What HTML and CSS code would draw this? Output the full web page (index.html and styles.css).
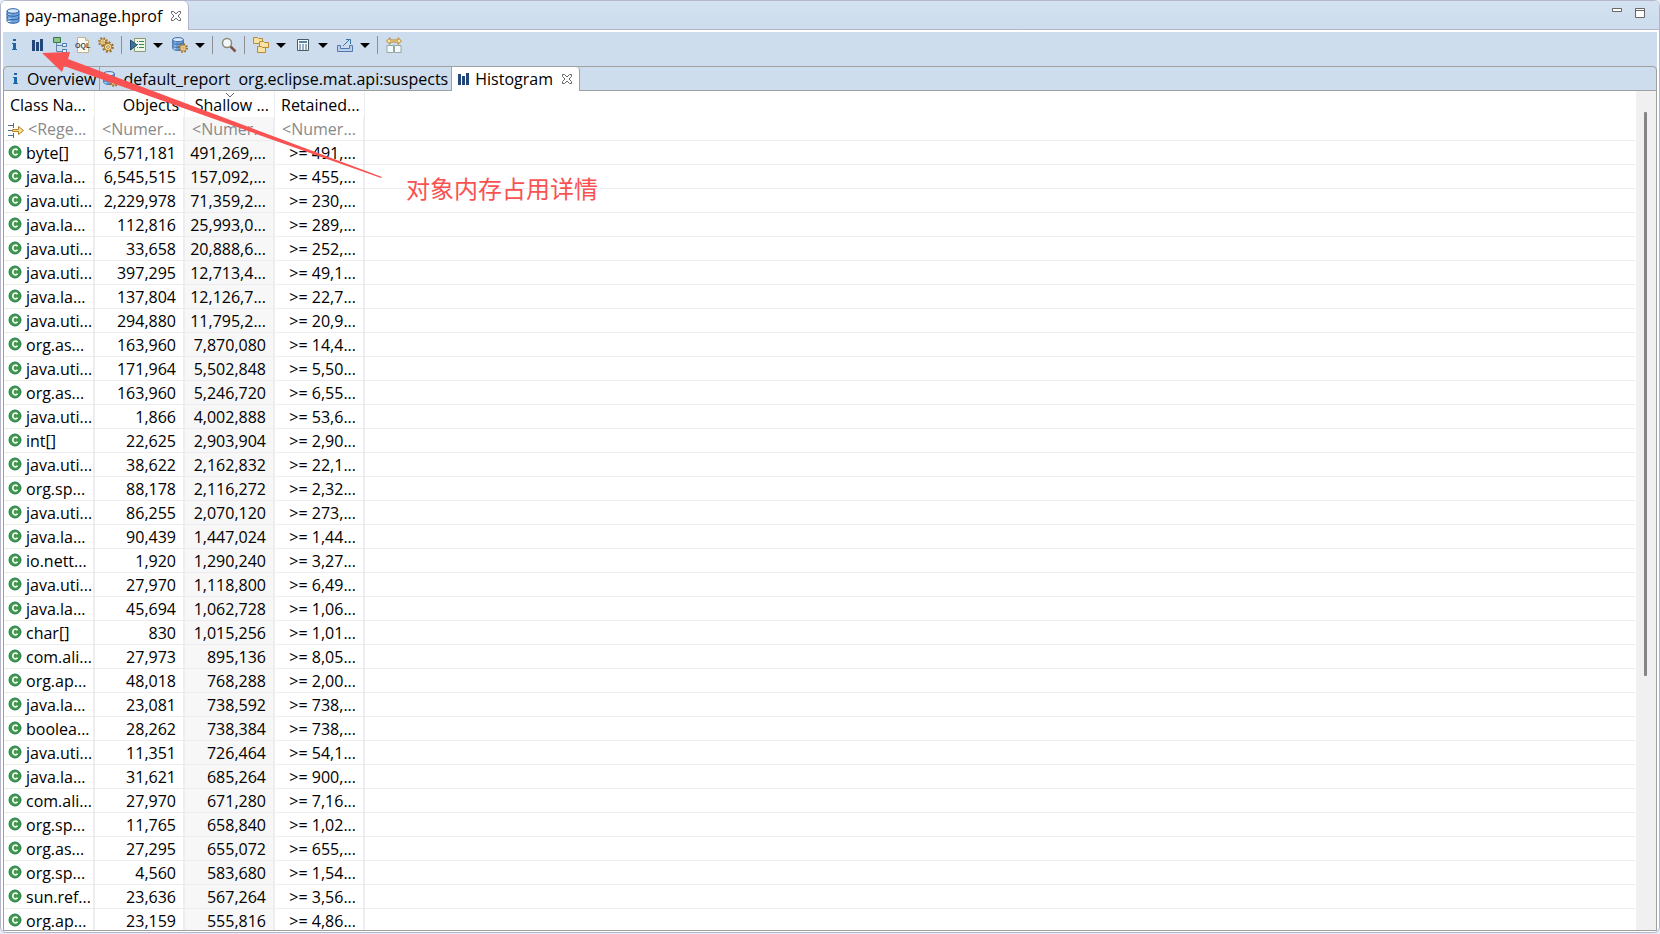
FILE: index.html
```html
<!DOCTYPE html>
<html lang="zh-CN">
<head>
    <meta charset="UTF-8">
    <meta name="viewport" content="width=device-width, initial-scale=1.0">
    <title>pay-manage.hprof</title>
    <link rel="stylesheet" href="styles.css">
</head>
<body>
    <svg class="symbols" aria-hidden="true">
        <symbol id="db" viewBox="0 0 16 16">
            <path d="M2 3v10c0 3 12 3 12 0V3z" fill="#6fa3e0" stroke="#2c5f9e"/>
            <ellipse cx="8" cy="3" rx="6" ry="2.3" fill="#d6e8fb" stroke="#2c5f9e"/>
            <path d="M4 6.500v1M4 10v1.500M4 13v1" stroke="#e6f1fd" stroke-width="3"/>
            <path d="M2 6c0 3 12 3 12 0M2 9.500c0 3 12 3 12 0" fill="none" stroke="#2c5f9e"/>
        </symbol>
        <symbol id="gear" viewBox="0 0 16 16">
            <circle cx="8" cy="8" r="6.300" fill="none" stroke="#9a6b26" stroke-width="3" stroke-dasharray="2.500 2.448"/>
            <circle cx="8" cy="8" r="4.800" fill="#f9dc96" stroke="#a9782e" stroke-width="1.300"/>
            <circle cx="8" cy="8" r="1.800" fill="#fff" stroke="#9a6b26"/>
        </symbol>
        <symbol id="dbgear" viewBox="0 0 16 16">
            <use href="#db" x="-1" y="0" width="14" height="14"/>
            <use href="#gear" x="6" y="6" width="10" height="10"/>
        </symbol>
        <symbol id="info" viewBox="0 0 16 16">
            <path d="M7 2h3v2H7zM6 6h4v6h1v1H6v-1h1V7H6z" fill="#1f66a5"/>
        </symbol>
        <symbol id="bars" viewBox="0 0 16 16">
            <path d="M3 3h3v11H3zM7 5h3v9H7zM11 2h3v12h-3z" fill="#23467b"/>
        </symbol>
        <symbol id="close" viewBox="0 0 12 12">
            <path d="M1.500 1.500h2L6 4l2.500-2.500h2v2L8 6l2.500 2.500v2h-2L6 8l-2.500 2.500h-2v-2L4 6 1.500 3.500z" fill="#fff" stroke="#666"/>
        </symbol>
        <symbol id="class" viewBox="0 0 14 14">
            <circle cx="7" cy="7" r="6" fill="#3b9a49" stroke="#2b7d4c"/>
            <path d="M9.500 5.200C8 3.300 4.800 4 4.800 7s3.200 3.700 4.700 1.800" fill="none" stroke="#fff" stroke-width="1.700"/>
        </symbol>
    </svg>

    <div class="view">
        <header class="editor-bar">
            <button type="button" class="editor-tab">
                <svg class="icon"><use href="#db"/></svg>
                <span>pay-manage.hprof</span>
                <svg class="close"><use href="#close"/></svg>
            </button>
            <div class="window-buttons">
                <button type="button" aria-label="Minimize"><svg viewBox="0 0 10 10"><path d="M.5.500h9v3h-9z" fill="#fff" stroke="#666"/></svg></button>
                <button type="button" aria-label="Maximize"><svg viewBox="0 0 10 10"><path d="M.5.500h9v9h-9zM0 2.500h10" fill="#fff" stroke="#666"/></svg></button>
            </div>
        </header>

        <main class="editor">
            <div class="toolbar">
                <button type="button" aria-label="Overview"><svg class="icon"><use href="#info"/></svg></button>
                <button type="button" aria-label="Histogram"><svg class="icon"><use href="#bars"/></svg></button>
                <button type="button" aria-label="Dominator tree">
                    <svg class="icon" viewBox="0 0 16 16"><path d="M4.500 6v8.500H10M4.500 8.500H10" fill="none" stroke="#5d86b3"/><path d="M1.500.500h7v5h-7z" fill="#8cc487" stroke="#35784a"/><path d="M10.500 6.500h4v3h-4zM10.500 12.500h4v3h-4z" fill="#e7f0fa" stroke="#4c7cae"/></svg>
                </button>
                <button type="button" aria-label="OQL">
                    <svg class="icon" viewBox="0 0 16 16"><path d="M2.500.500h8l3 3v12h-11z" fill="#fdfcf6" stroke="#c2b386"/><path d="M10.500.500v3h3" fill="#e7d9ac" stroke="#c2b386"/><text class="oql" x="0" y="11">OQL</text></svg>
                </button>
                <button type="button" aria-label="Calculate"><svg class="icon" viewBox="0 0 16 16"><use href="#gear" x="0" y="0" width="10" height="10"/><use href="#gear" x="4" y="4" width="12" height="12"/></svg></button>
                <i class="separator"></i>
                <button type="button" class="drop" aria-label="Run report">
                    <svg class="icon" viewBox="0 0 16 16"><path d="M4.500 1.500h11v13h-11z" fill="#edf6e9" stroke="#8d9a6c"/><path d="M7 4.500h1m1 0h5M7 7.500h1m1 0h5M7 10.500h1m1 0h5" stroke="#3f8a4a"/><path d="M.5 3v10L7 8z" fill="#3f7397" stroke="#1e4f75"/></svg>
                </button>
                <button type="button" class="drop" aria-label="Queries"><svg class="icon"><use href="#dbgear"/></svg></button>
                <i class="separator"></i>
                <button type="button" aria-label="Find">
                    <svg class="icon" viewBox="0 0 16 16"><path d="M9.500 9.500l5 5" stroke="#825347" stroke-width="2.500"/><circle cx="6" cy="6" r="4.500" fill="#f3f8fb" stroke="#8b8a78" stroke-width="1.500"/></svg>
                </button>
                <i class="separator"></i>
                <button type="button" class="drop" aria-label="Group">
                    <svg class="icon" viewBox="0 0 16 16"><g fill="#f9e3a0" stroke="#b8893a"><path d="M.5.500h4l1 1h4v5h-9z"/><path d="M6.500 4.500h4l1 1h4v5h-9z"/><path d="M4.500 9.500h4l1 1h3v5h-8z"/></g></svg>
                </button>
                <button type="button" class="drop" aria-label="Calculate retained size">
                    <svg class="icon" viewBox="0 0 16 16"><path d="M2.500 2.500h11v11h-11z" fill="#fff" stroke="#465c62"/><path d="M4 4h8v2H4z" fill="#4e89ad"/><path d="M4 8h8M4 10h8M4 12h8" stroke="#376484" stroke-dasharray="2 1"/></svg>
                </button>
                <button type="button" class="drop" aria-label="Export">
                    <svg class="icon" viewBox="0 0 16 16"><path d="M.5 8.500h3v3h9v-3h3v6H.5z" fill="#b8d0ed" stroke="#5577ad"/><path d="M6 9l7-7M9 2.500h4.500V7" fill="none" stroke="#3675a9"/></svg>
                </button>
                <i class="separator"></i>
                <button type="button" aria-label="Compare">
                    <svg class="icon" viewBox="0 0 16 16"><path d="M.5 4L4 .7V3h8V.7L15.500 4 12 7.300V5H4v2.300z" fill="#fbe7a5" stroke="#b6842d"/><path d="M1 8.500h6.500v7H1zM8.500 8.500H15v7H8.500z" fill="#f4f9fb" stroke="#93a8a5"/></svg>
                </button>
            </div>

            <section class="pages">
                <nav class="page-tabs">
                    <button type="button" class="page-tab"><svg class="icon"><use href="#info"/></svg>Overview</button>
                    <button type="button" class="page-tab"><svg class="icon"><use href="#dbgear"/></svg><span>default_report&nbsp; org.eclipse.mat.api:suspects</span></button>
                    <button type="button" class="page-tab active"><svg class="icon"><use href="#bars"/></svg>Histogram<svg class="close"><use href="#close"/></svg></button>
                </nav>
                <div class="table-area">
                    <div class="table-clip">
                        <table>
                            <colgroup><col class="name-col"><col class="data-col"><col class="data-col"><col class="data-col"><col></colgroup>
                            <thead>
                                <tr>
                                    <th>Class Na...</th>
                                    <th>Objects</th>
                                    <th>Shallow ...<svg class="sort" viewBox="0 0 10 6"><path d="M1 1l4 4 4-4" fill="none" stroke="#666"/></svg></th>
                                    <th>Retained...</th>
                                    <th></th>
                                </tr>
                            </thead>
                            <tbody id="rows">
                                <tr>
                                    <td>
                                        <div class="name">
                                            <svg class="icon" viewBox="0 0 16 16"><path d="M0 3.500h5M0 13.500h5M5.500 1v5M5.500 11v5M0 8.500h4" stroke="#4d708c"/><path d="M4.500 7.500h6v-3l5 4-5 4v-3h-6z" fill="#fbe29b" stroke="#b57f22"/></svg>
                                            <input type="text" aria-label="Class name filter" placeholder="&lt;Rege...">
                                        </div>
                                    </td>
                                    <td><input type="text" aria-label="Objects filter" placeholder="&lt;Numer..."></td>
                                    <td><input type="text" aria-label="Shallow heap filter" placeholder="&lt;Numer..."></td>
                                    <td><input type="text" aria-label="Retained heap filter" placeholder="&lt;Numer..."></td>
                                    <td></td>
                                </tr>
                            </tbody>
                        </table>
                    </div>
                    <div class="scrollbar"><div class="thumb"></div></div>
                </div>
            </section>
        </main>
    </div>

    <div class="note">
        <svg viewBox="0 0 342 128"><path d="M0 0L28-1 26 6 340 124 339 125 22 13 20 19z" fill="#fa5252"/></svg>
        <span>对象内存占用详情</span>
    </div>
    <script src="script.js"></script>
</body>
</html>
```
FILE: styles.css
```css
:root {
    --frame: #b4b7cb;
    --line: #a0a0a0;
    --bar: #cddded;
    --grid: #ededf0;
    --note: #fa5252;
}

* {
    box-sizing: border-box;
}

body {
    margin: 0;
    height: 100vh;
    overflow: hidden;
    background-color: #e6ebf8;
    color: #000;
    font: 16px/24px "Open Sans", "Noto Sans CJK SC", sans-serif;
}

button {
    display: flex;
    align-items: center;
    padding: 0;
    border: none;
    background: none;
    color: inherit;
    font: inherit;
}

svg {
    display: block;
    flex: none;
}

.symbols {
    position: absolute;
    width: 0;
    height: 0;
}

.icon {
    width: 16px;
    height: 16px;
}

.close {
    width: 12px;
    height: 12px;
}

.view {
    display: flex;
    flex-direction: column;
    height: calc(100vh - 1px);
    border: 1px solid var(--frame);
    border-radius: 6px;
    background-color: #fff;
    overflow: hidden;
}

.editor-bar {
    display: flex;
    justify-content: space-between;
    height: 29px;
    background: linear-gradient(#d3e1f0, var(--bar));
    box-shadow: inset 0 -1px var(--frame);
}

.editor-tab {
    gap: 4px;
    padding: 0 6px 0 4px;
    border-right: 1px solid var(--frame);
    border-radius: 0 6px 0 0;
    background-color: #fff;
}

.editor-tab .close {
    margin-left: 4px;
}

.window-buttons {
    display: flex;
    gap: 13px;
    padding: 7px 14px 0 0;
    align-items: flex-start;
}

.window-buttons svg {
    width: 10px;
    height: 10px;
}

.editor {
    display: flex;
    flex: 1;
    flex-direction: column;
    min-height: 0;
    margin: 2px 2px 1px;
    background-color: var(--bar);
}

.toolbar {
    display: flex;
    align-items: center;
    height: 34px;
    padding: 0 0 8px 3px;
    gap: 7px;
}

.separator {
    width: 1px;
    height: 18px;
    margin-right: 1px;
    background-color: #8c8f94;
}

.drop {
    gap: 7px;
}

.drop + .drop {
    margin-left: 2px;
}

.drop::after {
    content: "";
    border: 5px solid transparent;
    border-top-color: #000;
    border-bottom: none;
}

.oql {
    font: bold 7px "Liberation Sans", sans-serif;
    fill: #444;
}

.pages {
    display: flex;
    flex: 1;
    flex-direction: column;
    min-height: 0;
    border: 1px solid var(--line);
    border-radius: 4px 4px 0 0;
    background-color: var(--bar);
}

.page-tabs {
    display: flex;
    height: 24px;
    box-shadow: inset 0 -1px var(--line);
}

.page-tab {
    gap: 4px;
    padding: 0 3px;
    border-right: 1px solid var(--line);
}

.page-tab.active {
    padding-right: 6px;
    border-radius: 0 4px 0 0;
    background-color: #fff;
}

.page-tab .close {
    margin-left: 4px;
}

.table-area {
    display: flex;
    flex: 1;
    min-height: 0;
    background-color: #fff;
}

.table-clip {
    flex: 1;
    overflow: hidden;
    margin-right: 1px;
}

table {
    width: 100%;
    border-collapse: separate;
    border-spacing: 0;
    table-layout: fixed;
}

.name-col {
    width: 91px;
}

.data-col {
    width: 90px;
}

th,
td {
    height: 24px;
    padding: 2px 7px 0 4px;
    border-right: 2px solid var(--grid);
    border-bottom: 1px solid var(--grid);
    line-height: 21px;
    text-align: right;
    white-space: nowrap;
    overflow: hidden;
}

th {
    position: relative;
    height: 26px;
    padding: 2px 5px 0 6px;
    border-right-width: 1px;
    border-bottom: none;
    font-weight: normal;
}

th:first-child,
td:first-child {
    text-align: left;
}

td:first-child {
    padding-right: 0;
}

th:last-child,
td:last-child {
    border-right: none;
}

td:nth-child(3) {
    background-color: #f7f7f7;
}

.sort {
    position: absolute;
    top: 1px;
    left: 40px;
    width: 10px;
    height: 6px;
}

.name {
    display: flex;
    align-items: center;
    gap: 4px;
}

.name .class {
    width: 14px;
    height: 14px;
    margin-bottom: 3px;
}

input {
    display: block;
    width: 100%;
    min-width: 0;
    height: 21px;
    padding: 0;
    border: none;
    background: none;
    font: inherit;
    text-align: inherit;
}

input::placeholder {
    color: #8a8a8a;
}

.scrollbar {
    width: 20px;
    padding-top: 21px;
    background-color: #f0f0f0;
}

.thumb {
    width: 3px;
    height: 69%;
    margin-left: 8px;
    border-radius: 1px;
    background-color: #858585;
}

.note {
    position: absolute;
    top: 53px;
    left: 42px;
    color: var(--note);
    font: 24px/32px "Noto Sans CJK SC", sans-serif;
    pointer-events: none;
}

.note svg {
    width: 342px;
    height: 128px;
    overflow: visible;
}

.note span {
    position: absolute;
    top: 119px;
    left: 364px;
    white-space: nowrap;
}
```
FILE: script.js
```js
const classes = [
    ["byte[]", "6,571,181", "491,269,...", "491,..."],
    ["java.la...", "6,545,515", "157,092,...", "455,..."],
    ["java.uti...", "2,229,978", "71,359,2...", "230,..."],
    ["java.la...", "112,816", "25,993,0...", "289,..."],
    ["java.uti...", "33,658", "20,888,6...", "252,..."],
    ["java.uti...", "397,295", "12,713,4...", "49,1..."],
    ["java.la...", "137,804", "12,126,7...", "22,7..."],
    ["java.uti...", "294,880", "11,795,2...", "20,9..."],
    ["org.as...", "163,960", "7,870,080", "14,4..."],
    ["java.uti...", "171,964", "5,502,848", "5,50..."],
    ["org.as...", "163,960", "5,246,720", "6,55..."],
    ["java.uti...", "1,866", "4,002,888", "53,6..."],
    ["int[]", "22,625", "2,903,904", "2,90..."],
    ["java.uti...", "38,622", "2,162,832", "22,1..."],
    ["org.sp...", "88,178", "2,116,272", "2,32..."],
    ["java.uti...", "86,255", "2,070,120", "273,..."],
    ["java.la...", "90,439", "1,447,024", "1,44..."],
    ["io.nett...", "1,920", "1,290,240", "3,27..."],
    ["java.uti...", "27,970", "1,118,800", "6,49..."],
    ["java.la...", "45,694", "1,062,728", "1,06..."],
    ["char[]", "830", "1,015,256", "1,01..."],
    ["com.ali...", "27,973", "895,136", "8,05..."],
    ["org.ap...", "48,018", "768,288", "2,00..."],
    ["java.la...", "23,081", "738,592", "738,..."],
    ["boolea...", "28,262", "738,384", "738,..."],
    ["java.uti...", "11,351", "726,464", "54,1..."],
    ["java.la...", "31,621", "685,264", "900,..."],
    ["com.ali...", "27,970", "671,280", "7,16..."],
    ["org.sp...", "11,765", "658,840", "1,02..."],
    ["org.as...", "27,295", "655,072", "655,..."],
    ["org.sp...", "4,560", "583,680", "1,54..."],
    ["sun.ref...", "23,636", "567,264", "3,56..."],
    ["org.ap...", "23,159", "555,816", "4,86..."]
];

let html = "";
classes.forEach(([name, objects, shallow, retained]) => {
    html += `
        <tr>
            <td><div class="name"><svg class="class"><use href="#class"/></svg>${name}</div></td>
            <td>${objects}</td>
            <td>${shallow}</td>
            <td>&gt;= ${retained}</td>
            <td></td>
        </tr>
    `;
});
document.getElementById("rows").insertAdjacentHTML("beforeend", html);
```
